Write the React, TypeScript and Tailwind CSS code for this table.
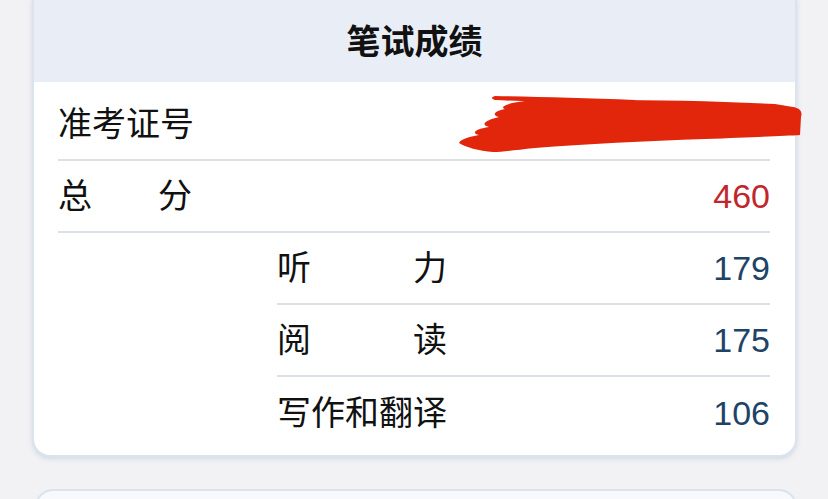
import React from "react";

const cjk = "font-['Liberation_Sans','Noto_Sans_CJK_SC',sans-serif]";

function Scribble() {
  return (
    <svg
      className="absolute left-[455px] top-[95px]"
      width="348"
      height="60"
      viewBox="0 0 348 60"
    >
      <g fill="#e2260b">
        <path d="M70 6 C 140 4, 240 5, 320 9 L 338 12 C 344 13, 348 16, 346 22 L 345 40 C 330 41, 300 42, 250 44 C 190 46, 130 49, 80 53 C 60 55, 48 57, 38 57 C 24 56, 10 52, 4 48 C 6 44, 14 42, 24 40 C 16 38, 20 34, 34 32 C 26 30, 28 26, 44 22 C 36 20, 40 16, 50 14 C 44 12, 52 8, 70 6 Z" />
        <path d="M40 1 C 80 2, 130 3, 180 5 L 180 8 C 130 8, 80 7, 40 5 C 36 4, 36 2, 40 1 Z" />
        <path d="M300 10 C 320 11, 335 13, 342 16 L 340 22 C 330 18, 315 15, 300 14 Z" />
      </g>
    </svg>
  );
}

function Row({
  label,
  value,
  red,
  last,
}: {
  label: React.ReactNode;
  value: string;
  red?: boolean;
  last?: boolean;
}) {
  return (
    <div
      className={`flex items-center justify-between h-[72px] ${
        last ? "" : "border-b-2 border-[#dde1e6]"
      }`}
    >
      <div className="text-[34px] text-[#111]">{label}</div>
      <div
        className={`font-['Liberation_Sans',sans-serif] text-[34px] ${
          red ? "text-[#c0272d]" : "text-[#1d4466]"
        }`}
      >
        {value}
      </div>
    </div>
  );
}

export default function App() {
  return (
    <div className={`relative w-[828px] h-[499px] overflow-hidden bg-[#f2f2f4] ${cjk}`}>
      <div className="mt-[-16px] ml-[32px] w-[765px] rounded-[18px] border-2 border-[#dbe3ec] bg-white shadow-[0_2px_4px_rgba(180,195,215,0.5)]">
        <div className="h-[96px] pt-[16px] rounded-t-[16px] bg-[#e9eef6] flex items-center justify-center text-[34px] font-bold text-[#111]">
          笔试成绩
        </div>
        <div className="pl-[24px] pr-[25px]">
          <div className="flex items-center h-[79px] pt-[8px] border-b-2 border-[#dde1e6] text-[34px] text-[#111]">
            准考证号
          </div>
          <Row
            label={
              <div className="flex justify-between w-[134px]">
                <span>总</span>
                <span>分</span>
              </div>
            }
            value="460"
            red
          />
          <div className="ml-[219px]">
            <Row
              label={
                <div className="flex justify-between w-[170px]">
                  <span>听</span>
                  <span>力</span>
                </div>
              }
              value="179"
            />
            <Row
              label={
                <div className="flex justify-between w-[170px]">
                  <span>阅</span>
                  <span>读</span>
                </div>
              }
              value="175"
            />
            <Row label="写作和翻译" value="106" last />
          </div>
          <div className="h-[6px]" />
        </div>
      </div>
      <div className="mt-[32px] ml-[35px] w-[762px] h-[60px] rounded-[18px] border-2 border-[#dbe3ec] bg-[#f7f9fc]" />
      <Scribble />
    </div>
  );
}
